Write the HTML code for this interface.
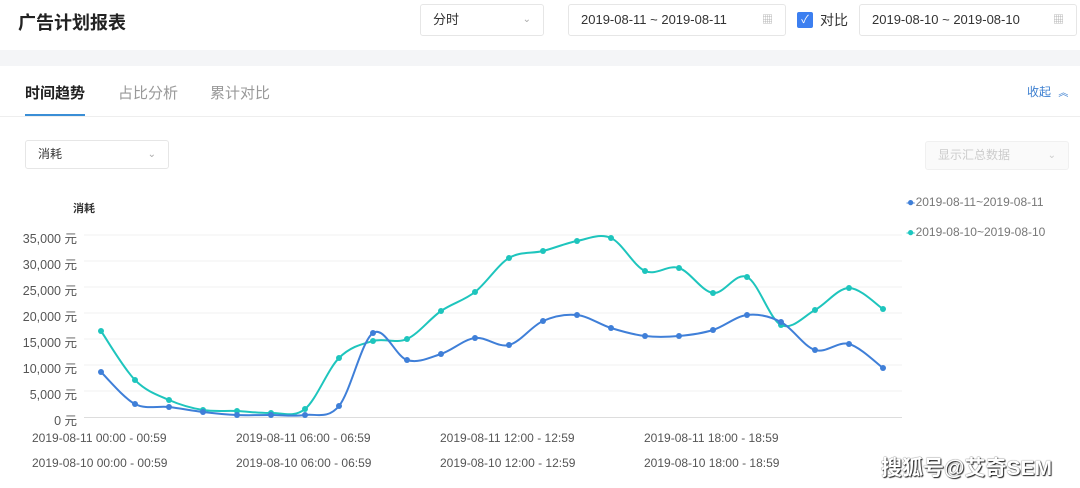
<!DOCTYPE html>
<html><head><meta charset="utf-8"><style>
*{margin:0;padding:0;box-sizing:border-box}
body{width:1080px;height:488px;overflow:hidden;background:#f4f5f7;font-family:"Liberation Sans","Noto Sans CJK SC",sans-serif;position:relative}
.top{position:absolute;left:0;top:0;width:1080px;height:50px;background:#fff}
.title{position:absolute;left:18px;top:9px;font-size:18px;font-weight:bold;color:#222}
.box{position:absolute;top:4px;height:32px;border:1px solid #e6e6e6;border-radius:3px;background:#fff;font-size:13px;color:#333;line-height:30px;padding-left:12px}
.card{position:absolute;left:0;top:66px;width:1080px;height:422px;background:#fff}
.tab{position:absolute;top:82px;font-size:15px;color:#999}
.a{color:#222;font-weight:bold}
.ylab{position:absolute;left:0;width:77px;text-align:right;font-size:12.5px;color:#555}
.xl{position:absolute;font-size:12px;color:#555}
</style></head><body>
<div class="top"></div>
<div class="title">广告计划报表</div>
<div class="box" style="left:420px;width:124px">分时<span style="position:absolute;right:12px;color:#aaa;font-size:10px">&#8964;</span></div>
<div class="box" style="left:568px;width:218px">2019-08-11 ~ 2019-08-11<span style="position:absolute;right:12px;color:#aaa;font-size:11px">▦</span></div>
<div style="position:absolute;left:797px;top:12px;width:16px;height:16px;background:#3c7ff0;border-radius:2px;color:#fff;font-size:11px;text-align:center;line-height:16px">✓</div>
<div style="position:absolute;left:820px;top:10px;font-size:14px;color:#333">对比</div>
<div class="box" style="left:859px;width:218px">2019-08-10 ~ 2019-08-10<span style="position:absolute;right:12px;color:#aaa;font-size:11px">▦</span></div>
<div class="card"></div>
<div class="tab a" style="left:25px">时间趋势</div>
<div class="tab" style="left:118px">占比分析</div>
<div class="tab" style="left:210px">累计对比</div>
<div style="position:absolute;left:25px;top:114px;width:60px;height:3px;background:#3a8ed6"></div>
<div style="position:absolute;left:0;top:116px;width:1080px;height:1px;background:#eee"></div>
<div style="position:absolute;left:1027px;top:83px;font-size:12px;color:#3c7fd0">收起 <span style="font-size:10px;margin-left:4px">︽</span></div>
<div class="box" style="left:25px;top:140px;width:144px;height:29px;line-height:27px;font-size:12px">消耗<span style="position:absolute;right:12px;color:#aaa;font-size:10px">&#8964;</span></div>
<div class="box" style="left:925px;top:141px;width:144px;height:29px;line-height:27px;font-size:12px;color:#ccc;background:#fafafa;border-color:#f0f0f0">显示汇总数据<span style="position:absolute;right:12px;font-size:10px">&#8964;</span></div>
<div style="position:absolute;left:73px;top:200px;font-size:11px;font-weight:bold;color:#333">消耗</div>
<div class="ylab" style="top:228px">35,000 元</div>
<div class="ylab" style="top:254px">30,000 元</div>
<div class="ylab" style="top:280px">25,000 元</div>
<div class="ylab" style="top:306px">20,000 元</div>
<div class="ylab" style="top:332px">15,000 元</div>
<div class="ylab" style="top:358px">10,000 元</div>
<div class="ylab" style="top:384px">5,000 元</div>
<div class="ylab" style="top:410px">0 元</div>
<div class="xl" style="left:32px;top:431px">2019-08-11 00:00 - 00:59</div>
<div class="xl" style="left:32px;top:456px">2019-08-10 00:00 - 00:59</div>
<div class="xl" style="left:236px;top:431px">2019-08-11 06:00 - 06:59</div>
<div class="xl" style="left:236px;top:456px">2019-08-10 06:00 - 06:59</div>
<div class="xl" style="left:440px;top:431px">2019-08-11 12:00 - 12:59</div>
<div class="xl" style="left:440px;top:456px">2019-08-10 12:00 - 12:59</div>
<div class="xl" style="left:644px;top:431px">2019-08-11 18:00 - 18:59</div>
<div class="xl" style="left:644px;top:456px">2019-08-10 18:00 - 18:59</div>
<div class="xl" style="left:906px;top:195px;color:#777"><span style="color:#3f7fd8;letter-spacing:-3px">-●-</span> 2019-08-11~2019-08-11</div>
<div class="xl" style="left:906px;top:225px;color:#777"><span style="color:#1cc7c0;letter-spacing:-3px">-●-</span> 2019-08-10~2019-08-10</div>
<svg id="ch" width="1080" height="488" style="position:absolute;left:0;top:0">
<g stroke="#f2f2f2" stroke-width="1">
<line x1="84" y1="235" x2="902" y2="235"/><line x1="84" y1="261" x2="902" y2="261"/><line x1="84" y1="287" x2="902" y2="287"/><line x1="84" y1="313" x2="902" y2="313"/><line x1="84" y1="339" x2="902" y2="339"/><line x1="84" y1="365" x2="902" y2="365"/><line x1="84" y1="391" x2="902" y2="391"/></g>
<line x1="84" y1="417.5" x2="902" y2="417.5" stroke="#ddd"/>
</svg>
<div style="position:absolute;left:881px;top:452px;font-size:21px;color:#fff;font-weight:bold;text-shadow:0 0 1px #222,1px 1px 1px #222">搜狐号@艾奇SEM</div>
<script>
var b=[372,404,407,412,415,415,415,406,333,360,354,338,345,321,315,328,336,336,330,315,322,350,344,368];
var t=[331,380,400,410,411,413,409,358,341,339,311,292,258,251,241,238,271,268,293,277,325,310,288,309];
function draw(d,c){var p=d.map(function(y,i){return[101+i*34,y]});var s="M"+p[0];
for(var i=0;i<p.length-1;i++){var p0=p[i-1]||p[i],p1=p[i],p2=p[i+1],p3=p[i+2]||p2;
s+=" C"+(p1[0]+(p2[0]-p0[0])/6)+","+(p1[1]+(p2[1]-p0[1])/6)+" "+(p2[0]-(p3[0]-p1[0])/6)+","+(p2[1]-(p3[1]-p1[1])/6)+" "+p2;}
var h='<path d="'+s+'" fill="none" stroke="'+c+'" stroke-width="2"/>';
p.forEach(function(q){h+='<circle cx="'+q[0]+'" cy="'+q[1]+'" r="3" fill="'+c+'"/>'});return h;}
var svg=document.getElementById('ch');svg.insertAdjacentHTML('beforeend',draw(t,'#1ec5bd')+draw(b,'#3f7fd8'));
</script>
</body></html>
